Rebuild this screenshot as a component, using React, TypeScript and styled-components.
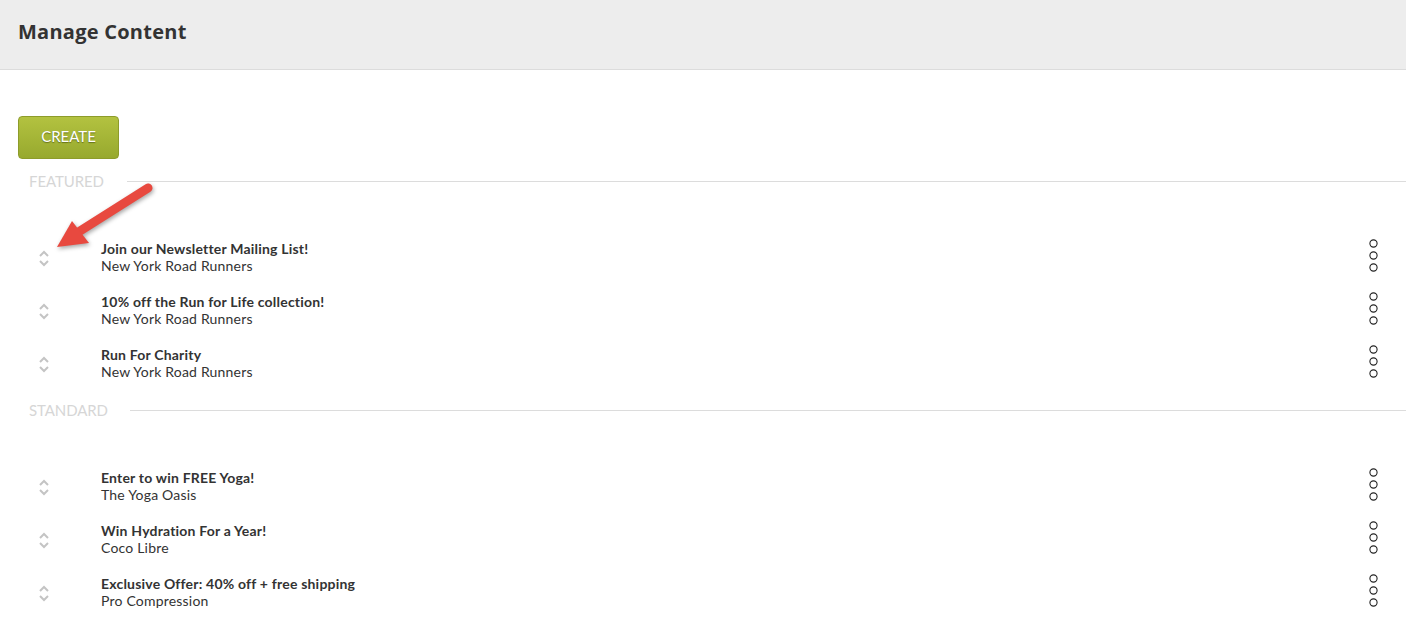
import React from 'react';
import styled, { createGlobalStyle } from 'styled-components';

const featured = [
  { title: 'Join our Newsletter Mailing List!', owner: 'New York Road Runners' },
  { title: '10% off the Run for Life collection!', owner: 'New York Road Runners' },
  { title: 'Run For Charity', owner: 'New York Road Runners' },
];

const standard = [
  { title: 'Enter to win FREE Yoga!', owner: 'The Yoga Oasis' },
  { title: 'Win Hydration For a Year!', owner: 'Coco Libre' },
  { title: 'Exclusive Offer: 40% off + free shipping', owner: 'Pro Compression' },
];

const GlobalStyle = createGlobalStyle`
  html, body {
    margin: 0;
    padding: 0;
    background: #fff;
  }
  body {
    font-family: 'Lato', 'Liberation Sans', sans-serif;
    color: #333;
  }
`;

const SPage = styled.div`
  position: relative;
  width: 1406px;
  height: 620px;
  overflow: hidden;
`;

const SHeader = styled.header`
  height: 69px;
  background-color: #ededed;
  border-bottom: 1px solid #dcdcdc;
  display: flex;
  align-items: center;
  padding: 0 18px;
`;

const STitle = styled.h1`
  margin: 0 0 6px;
  font-family: 'Open Sans', 'Liberation Sans', sans-serif;
  font-size: 20px;
  font-weight: 700;
  color: #333;
  letter-spacing: 0.25px;
`;

const SContent = styled.div`
  padding: 46px 0 0 18px;
`;

const SCreate = styled.button`
  width: 101px;
  height: 43px;
  padding: 0 0 3px;
  border: 1px solid #8d9c2a;
  border-radius: 4px;
  background: linear-gradient(#b3c240, #97a92e);
  color: #fff;
  font-family: 'Lato', 'Liberation Sans', sans-serif;
  font-size: 15px;
  text-shadow: 0 1px 1px rgba(60, 70, 10, 0.6);
  cursor: pointer;
  margin-bottom: 12px;
`;

const SSection = styled.section<{ $top: number }>`
  margin-top: ${(p) => p.$top}px;
`;

const SSectionHead = styled.div<{ $gap: number }>`
  display: flex;
  align-items: center;
  gap: ${(p) => p.$gap}px;
  height: 20px;
  padding-left: 11px;
  margin-bottom: 40px;
`;

const SLabel = styled.span`
  font-size: 15px;
  color: #d6d6d6;
  text-transform: uppercase;
  letter-spacing: -0.1px;
`;

const SRule = styled.div`
  flex: 1;
  height: 1px;
  background: #dcdcdc;
`;

const SRow = styled.div`
  display: flex;
  align-items: center;
  height: 53px;
  padding-right: 27px;
`;

const SHandle = styled.div`
  width: 83px;
  display: flex;
  padding-left: 20px;
  box-sizing: border-box;
  padding-top: 2px;
`;

const SText = styled.div`
  flex: 1;
  display: flex;
  flex-direction: column;
  margin-top: -2px;
  font-size: 14px;
  line-height: 17px;
  letter-spacing: 0.2px;
`;

const SItemTitle = styled.span`
  font-weight: 700;
  color: #333;
`;

const SItemOwner = styled.span`
  color: #333;
`;

const SMenu = styled.button`
  border: 0;
  background: none;
  padding: 0;
  display: flex;
  cursor: pointer;
  margin-top: -4px;
`;

const SArrow = styled.svg`
  position: absolute;
  left: 50px;
  top: 180px;
  overflow: visible;
  filter: drop-shadow(1px 2px 2px rgba(0, 0, 0, 0.35));
`;

const Handle = () => (
  <svg width="12" height="17" viewBox="0 0 12 17">
    <path d="M2 6 L6 2 L10 6" fill="none" stroke="#c4c4c4" strokeWidth="2" />
    <path d="M2 11 L6 15 L10 11" fill="none" stroke="#c4c4c4" strokeWidth="2" />
  </svg>
);

const Dots = () => (
  <svg width="11" height="33" viewBox="0 0 11 33">
    <circle cx="5.5" cy="4.5" r="3.6" fill="none" stroke="#222" strokeWidth="1.1" />
    <circle cx="5.5" cy="16.5" r="3.6" fill="none" stroke="#222" strokeWidth="1.1" />
    <circle cx="5.5" cy="28.5" r="3.6" fill="none" stroke="#222" strokeWidth="1.1" />
  </svg>
);

const Item = ({ title, owner }: { title: string; owner: string }) => (
  <SRow>
    <SHandle>
      <Handle />
    </SHandle>
    <SText>
      <SItemTitle>{title}</SItemTitle>
      <SItemOwner>{owner}</SItemOwner>
    </SText>
    <SMenu aria-label="More">
      <Dots />
    </SMenu>
  </SRow>
);

const App = () => {
  return (
    <>
      <GlobalStyle />
      <SPage>
        <SHeader>
          <STitle>Manage Content</STitle>
        </SHeader>
        <SContent>
          <SCreate>CREATE</SCreate>
          <SSection $top={0}>
            <SSectionHead $gap={23}>
              <SLabel>Featured</SLabel>
              <SRule />
            </SSectionHead>
            {featured.map((el, index) => (
              <Item key={index} {...el} />
            ))}
          </SSection>
          <SSection $top={10}>
            <SSectionHead $gap={22}>
              <SLabel>Standard</SLabel>
              <SRule />
            </SSectionHead>
            {standard.map((el, index) => (
              <Item key={index} {...el} />
            ))}
          </SSection>
        </SContent>
        <SArrow width="110" height="75" viewBox="0 0 110 75">
          <line x1="98" y1="8" x2="30" y2="51" stroke="#e8493f" strokeWidth="9" strokeLinecap="round" />
          <polygon points="7,67 22,41 39,63" fill="#e8493f" />
        </SArrow>
      </SPage>
    </>
  );
};

export default App;
